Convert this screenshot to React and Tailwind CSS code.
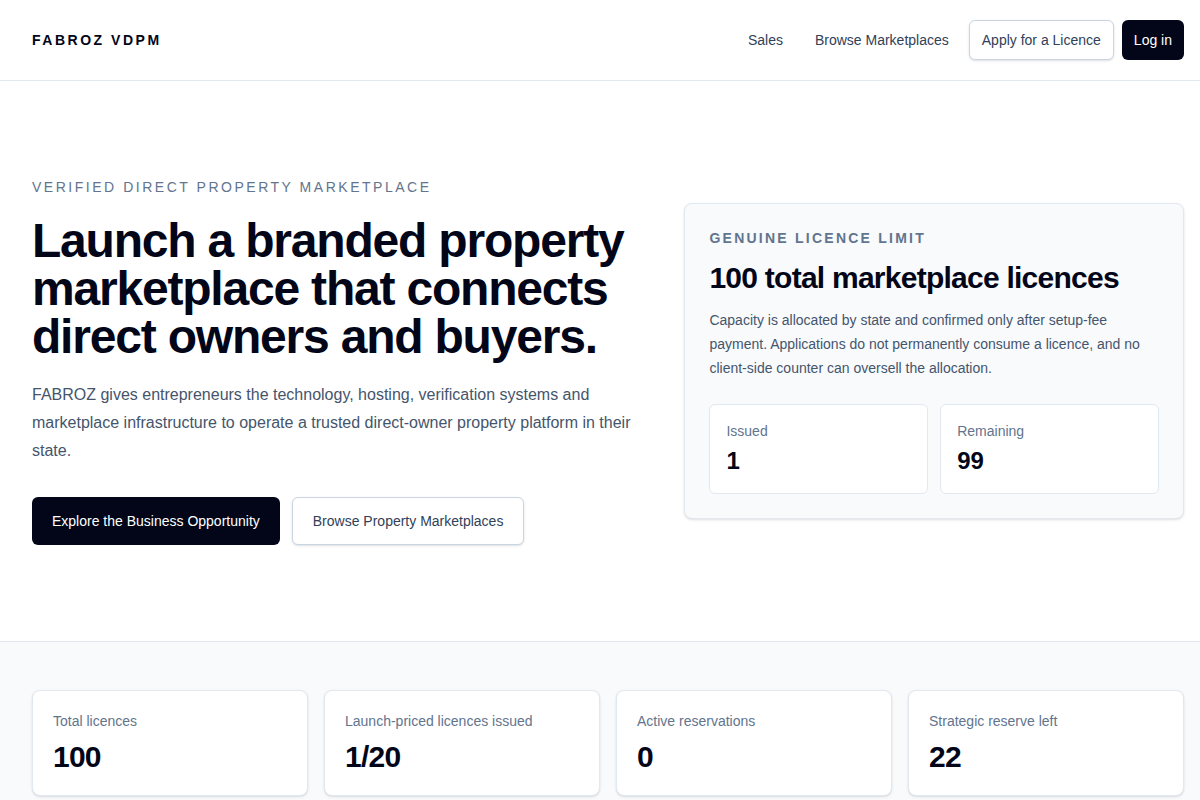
const stats = [
  { label: "Total licences", value: "100" },
  { label: "Launch-priced licences issued", value: "1/20" },
  { label: "Active reservations", value: "0" },
  { label: "Strategic reserve left", value: "22" },
];

const App = () => {
  return (
    <div className="min-h-screen bg-white font-['Liberation_Sans',Arial,sans-serif] text-slate-950">
      {/* Header */}
      <header className="border-b border-slate-200">
        <div className="flex h-20 items-center justify-between pl-8 pr-4">
          <span className="text-sm font-bold tracking-[0.18em] text-slate-950">
            FABROZ VDPM
          </span>

          <nav className="flex items-center gap-2 text-sm">
            <a href="#" className="px-3 py-2 text-slate-700">
              Sales
            </a>
            <a href="#" className="px-3 py-2 text-slate-700">
              Browse Marketplaces
            </a>
            <a
              href="#"
              className="
                flex
                h-10
                items-center
                rounded-md
                border
                border-slate-300
                bg-white
                px-3
                text-slate-700
                shadow-sm
              "
            >
              Apply for a Licence
            </a>
            <a
              href="#"
              className="
                flex
                h-10
                items-center
                rounded-md
                bg-slate-950
                px-3
                text-white
              "
            >
              Log in
            </a>
          </nav>
        </div>
      </header>

      {/* Hero */}
      <section className="py-24">
        <div className="grid grid-cols-[1.21fr_1fr] items-center gap-12 pl-8 pr-4">
          <div>
            <p className="text-sm tracking-[0.18em] text-slate-500">
              VERIFIED DIRECT PROPERTY MARKETPLACE
            </p>

            <h1 className="mt-5 text-5xl leading-none font-bold tracking-tight text-slate-950">
              Launch a branded property marketplace that connects direct owners
              and buyers.
            </h1>

            <p className="mt-5 text-base leading-7 text-slate-600">
              FABROZ gives entrepreneurs the technology, hosting, verification
              systems and marketplace infrastructure to operate a trusted
              direct-owner property platform in their state.
            </p>

            <div className="mt-8 flex gap-3 text-sm">
              <a
                href="#"
                className="flex h-12 items-center rounded-md bg-slate-950 px-5 text-white"
              >
                Explore the Business Opportunity
              </a>
              <a
                href="#"
                className="
                  flex
                  h-12
                  items-center
                  rounded-md
                  border
                  border-slate-300
                  bg-white
                  px-5
                  text-slate-700
                  shadow-sm
                "
              >
                Browse Property Marketplaces
              </a>
            </div>
          </div>

          {/* Licence card */}
          <div className="rounded-lg border border-slate-200 bg-slate-50 p-6 shadow-sm">
            <p className="text-sm font-bold tracking-[0.16em] text-slate-500">
              GENUINE LICENCE LIMIT
            </p>

            <h2 className="mt-3 text-3xl font-bold tracking-tight text-slate-950">
              100 total marketplace licences
            </h2>

            <p className="mt-3 text-sm leading-6 text-slate-600">
              Capacity is allocated by state and confirmed only after setup-fee
              payment. Applications do not permanently consume a licence, and no
              client-side counter can oversell the allocation.
            </p>

            <div className="mt-6 grid grid-cols-2 gap-3">
              <div className="rounded-md border border-slate-200 bg-white p-4">
                <p className="text-sm text-slate-500">Issued</p>
                <p className="mt-1 text-2xl font-bold text-slate-950">1</p>
              </div>
              <div className="rounded-md border border-slate-200 bg-white p-4">
                <p className="text-sm text-slate-500">Remaining</p>
                <p className="mt-1 text-2xl font-bold text-slate-950">99</p>
              </div>
            </div>
          </div>
        </div>
      </section>

      {/* Stats */}
      <section className="border-t border-slate-200 bg-slate-50 py-12">
        <div className="grid grid-cols-4 gap-4 pl-8 pr-4">
          {stats.map((stat) => (
            <div
              key={stat.label}
              className="rounded-lg border border-slate-200 bg-white p-5 shadow-sm"
            >
              <p className="text-sm text-slate-500">{stat.label}</p>
              <p className="mt-2 text-3xl font-bold tracking-tight text-slate-950">
                {stat.value}
              </p>
            </div>
          ))}
        </div>
      </section>
    </div>
  );
};

export default App;
